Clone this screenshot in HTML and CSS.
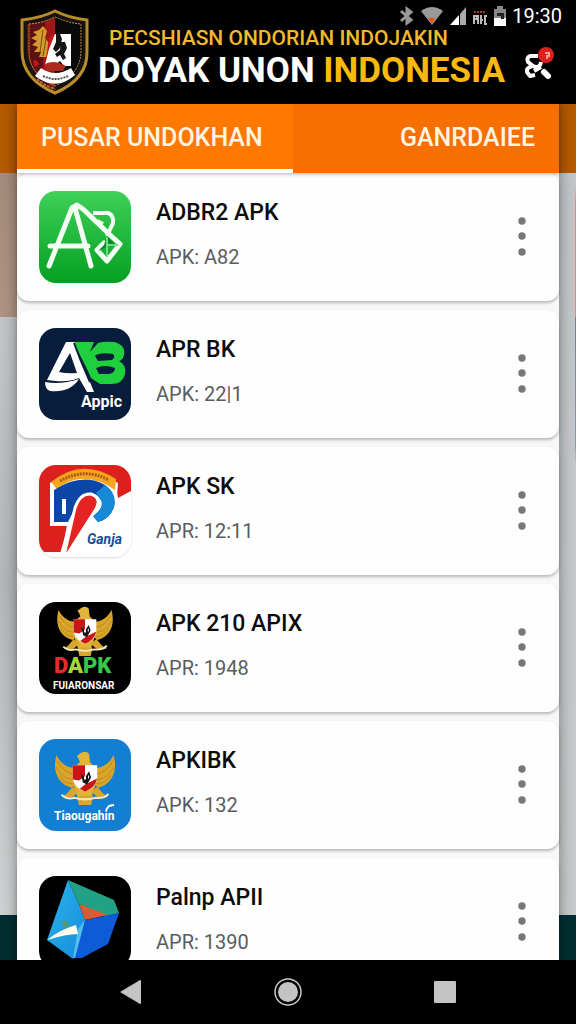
FILE: index.html
```html
<!DOCTYPE html>
<html lang="id">
<head>
  <meta charset="UTF-8">
  <meta name="viewport" content="width=device-width, initial-scale=1.0">
  <title>Doyak Unon Indonesia</title>
  <link rel="stylesheet" href="styles.css">
</head>
<body>
  <!-- shared shapes -->
  <svg class="defs" width="0" height="0" aria-hidden="true">
    <symbol id="garuda" viewBox="0 0 60 54">
      <path fill="#d9a62b" d="M2 4C-2 18 2 32 17 36L24 30 20 17C11 16 5 11 2 4ZM58 4C62 18 58 32 43 36L36 30 40 17C49 16 55 11 58 4Z"/>
      <path fill="none" stroke="#b07d18" stroke-width="0.7" d="M3 10C7 18 13 22 20 23M2 16C6 24 12 28 20 28M5 24C9 30 14 33 20 32M57 10C53 18 47 22 40 23M58 16C54 24 48 28 40 28M55 24C51 30 46 33 40 32"/>
      <path fill="#e3b43a" d="M24 8 22 5 26 2Q31-1 34 3L35 11 40 16V34L36 46H23L19 34V16L25 11Z"/>
      <path fill="#d9a62b" d="M18 35 12 42 8 45 17 46 24 40ZM42 35 48 42 53 45 43 46 36 40ZM22 44H38L36 53H24Z"/>
      <path fill="#fff" d="M18 14H42V28Q40 36 30 40 20 36 18 28Z"/>
      <path fill="#c81616" d="M18 14H30V25L24 29 18 28ZM30 33 42 27Q40 36 30 40L25 37Z"/>
      <path fill="#161616" d="M26 22 30 26 34 20 36 26 32 33 28 31Z"/>
      <path fill="#fff" d="M29 25h2v3h-2zM33 24h1v3h-1z"/>
      <path fill="none" stroke="#f3e9c5" stroke-width="2" d="M7 43Q12 48 20 46 30 49 40 46 49 47 53 42"/>
    </symbol>
    <symbol id="dots" viewBox="0 0 8 40">
      <circle cx="4" cy="5" r="3.7"/>
      <circle cx="4" cy="20" r="3.7"/>
      <circle cx="4" cy="36" r="3.7"/>
    </symbol>
  </svg>

  <header class="header">
    <svg class="crest" viewBox="0 0 70 86" aria-hidden="true">
      <path fill="#171313" stroke="#b98c2c" stroke-width="3" d="M35 2Q49 9 67 11V42Q68 70 35 84 2 70 2 42V11Q21 9 35 2Z"/>
      <path fill="#5d1112" d="M35 8Q22 14 7 15V42Q8 66 35 79Z"/>
      <path fill="#9f1618" d="M25 13 35 9V79L22 71Z"/>
      <path fill="#090909" d="M35 8Q48 14 63 15V42Q62 66 35 79Z"/>
      <path fill="none" stroke="#c39a43" stroke-width="1" stroke-dasharray="2 1" d="M9 15Q23 14 35 8 48 14 61 15V42Q61 65 35 77 9 65 9 42Z"/>
      <path fill="#d29a2d" d="M23 17 19 21 13 23 17 26 11 29 17 32 12 36 18 38 14 43 21 43 19 48 27 48 29 34 25 29 27 22Z"/>
      <path fill="none" stroke="#7b4a0c" d="M23 21 20 43M26 30 23 47"/>
      <path fill="#c91717" d="M29 28 35 25V48L24 60 27 43ZM13 52l3-1 3 4-4 3z"/>
      <path fill="#fff" d="M35 25H51V57H44L40 52 35 56H25L29 40Z"/>
      <path fill="#131313" d="M36 25h4l2 5-2 9-4 4-3-3 3-7zM41 33h4l2 6-3 6 2 4-3 2-3-5-3 2-2-3 5-4z"/>
      <path fill="#ad2a1f" d="M25 55Q34 50 46 57L43 62H27Z"/>
      <path fill="#fff" d="M21 59Q35 69 51 59L55 66Q36 83 15 67Z"/>
      <path fill="none" stroke="#555" stroke-width="2" stroke-dasharray="2 1" d="M23 67Q36 73 48 67"/>
      <path fill="none" stroke="#d66a25" stroke-width="2" stroke-dasharray="3 1" d="M17 70Q25 77 35 80"/>
    </svg>

    <div class="status">
      <svg width="16" height="20" viewBox="0 0 16 20" aria-label="Bluetooth">
        <path fill="none" stroke="#999" stroke-width="3" d="M2 5 12 14 8 17V3L12 6 2 15"/>
      </svg>
      <svg width="24" height="20" viewBox="0 0 24 20" aria-label="Wi-Fi">
        <path fill="#999" d="M1 5Q12-3 23 5L12 19Z"/>
        <path fill="#e35716" d="M8 12h7l-3 6z"/>
      </svg>
      <svg width="18" height="20" viewBox="0 0 18 20" aria-label="Sinyal">
        <path fill="#fff" d="M1 19 10 9V19Z"/>
        <path fill="#aaa" d="M11 8 17 1V19H11Z"/>
      </svg>
      <svg width="16" height="20" viewBox="0 0 16 20" aria-hidden="true">
        <path fill="none" stroke="#a33" stroke-width="2" stroke-dasharray="2 1" d="M2 6h12"/>
        <path fill="none" stroke="#bbb" stroke-width="2" d="M2 10v8M1 10h4v3H2M6 9v9M9 9v9M8 14h3M13 9v9h2M12 10h3"/>
      </svg>
      <svg width="14" height="20" viewBox="0 0 14 20" aria-label="Baterai">
        <path fill="#888" d="M4 0h6v3h3v9H1V3h3z"/>
        <path fill="#fff" d="M1 12h12v8H1z"/>
        <path fill="#222" d="M4 7h7v6H8v-3H4z"/>
      </svg>
      <time class="clock">19:30</time>
    </div>

    <div class="brand">
      <p class="brand-top">PECSHIASN ONDORIAN INDOJAKIN</p>
      <h1>DOYAK UNON <span>INDONESIA</span></h1>
    </div>

    <button class="search" type="button" aria-label="Cari">
      <svg width="32" height="36" viewBox="0 0 32 36">
        <path fill="none" stroke="#fff" stroke-width="4" stroke-linejoin="round" d="M14 10H6Q2 12 4 16L9 20Q16 23 17 16M10 20Q2 21 3 26L6 30 11 29M17 21 10 25"/>
        <path fill="none" stroke="#fff" stroke-width="6" stroke-linecap="round" d="M20 26 24 30"/>
        <circle cx="22" cy="9" r="8" fill="#dc201d"/>
        <path fill="none" stroke="#ff9d91" stroke-width="2" d="M21 7h4v3h-2v3"/>
      </svg>
    </button>
  </header>

  <main class="backdrop">
    <div class="sheet">
      <nav class="tabs">
        <a class="tab active" href="#pusar">PUSAR UNDOKHAN</a>
        <a class="tab" href="#ganrdaiee">GANRDAIEE</a>
      </nav>

      <ul class="list" id="pusar">
        <li class="card">
          <svg class="icon" viewBox="0 0 92 92" aria-hidden="true">
            <defs>
              <linearGradient id="green" x2="0" y2="1">
                <stop stop-color="#3fd05a"/>
                <stop offset="1" stop-color="#04a021"/>
              </linearGradient>
            </defs>
            <rect width="92" height="92" fill="url(#green)"/>
            <path fill="none" stroke="#f2fff2" stroke-width="5" stroke-linejoin="round" stroke-linecap="round" d="M10 75 33 17 38 14 44 18 70 43 81 53 68 70 58 59 65 52M36 17 52 75M11 55H49"/>
            <path fill="none" stroke="#f2fff2" stroke-width="4" d="M54 22H69Q75 24 74 32L68 45M58 30 64 33"/>
            <path fill="#0a8c2d" d="M68 45 76 53 68 56 59 60 65 54Z"/>
            <path fill="none" stroke="#72dc85" stroke-width="2" d="M68 46V66M67 54H79"/>
          </svg>
          <div class="info">
            <h2>ADBR2 APK</h2>
            <p>APK: A82</p>
          </div>
          <button class="more" type="button" aria-label="Menu ADBR2 APK"><svg><use href="#dots"/></svg></button>
        </li>

        <li class="card">
          <svg class="icon" viewBox="0 0 92 92" aria-hidden="true">
            <rect width="92" height="92" fill="#081d3c"/>
            <path fill="#20cf3c" d="M34 14H55L51 24 59 15Q65 13 75 14 87 17 85 27 84 32 80 33 88 37 86 46 84 56 72 56H61L52 50 49 43 42 29Z"/>
            <path fill="#081d3c" d="M56 28Q60 24 74 26 77 29 73 32L59 33ZM57 40Q66 36 76 40 76 45 70 46L60 46Z"/>
            <path fill="#fff" d="M27 14H35L55 64H48L40 50Q30 54 17 53L8 52ZM31 25 20 44Q29 46 38 45Z" fill-rule="evenodd"/>
            <path fill="#fff" d="M6 54Q22 57 40 51 31 65 11 63 6 61 6 54Z"/>
            <path fill="none" stroke="#081d3c" stroke-width="2" d="M35 15 42 33 51 54"/>
            <text class="appic-text" x="42" y="79">Appic</text>
          </svg>
          <div class="info">
            <h2>APR BK</h2>
            <p>APK: 22|1</p>
          </div>
          <button class="more" type="button" aria-label="Menu APR BK"><svg><use href="#dots"/></svg></button>
        </li>

        <li class="card">
          <svg class="icon pale" viewBox="0 0 92 92" aria-hidden="true">
            <rect width="92" height="92" fill="#fff"/>
            <path fill="#dc201e" d="M0 0H92V26L79 33 76 16 28 60 23 87H0Z"/>
            <path fill="#fff" d="M11 18Q44-4 79 18L78 31Q82 54 57 59L35 92H20L29 61H11Z"/>
            <path fill="#f5a51e" d="M12 17Q43-8 77 14L76 25Q44 3 18 24Z"/>
            <path fill="none" stroke="#a85c12" stroke-width="3" stroke-dasharray="2 1" d="M21 16Q45 2 70 15"/>
            <path fill="#0b46a8" d="M15 25Q43 7 66 20 78 28 75 42 71 54 59 57L54 51Q67 42 61 33 52 23 40 35L29 57H15Z"/>
            <path fill="#168ad8" d="M66 20Q78 28 75 42 71 54 59 57L54 51Q64 45 63 37L57 28Z"/>
            <path fill="none" stroke="#fff" stroke-width="4" d="M25 34V49"/>
            <path fill="#e42322" stroke="#fff" stroke-width="3" d="M25 91 36 43Q41 28 52 29 63 33 57 44L29 88Z"/>
            <text class="ganja-text" x="48" y="79">Ganja</text>
          </svg>
          <div class="info">
            <h2>APK SK</h2>
            <p>APR: 12:11</p>
          </div>
          <button class="more" type="button" aria-label="Menu APK SK"><svg><use href="#dots"/></svg></button>
        </li>

        <li class="card">
          <svg class="icon" viewBox="0 0 92 92" aria-hidden="true">
            <rect width="92" height="92" fill="#000"/>
            <use href="#garuda" x="17" y="4" width="58" height="51"/>
            <text class="dapk-text" x="15" y="71"><tspan fill="#e32c2c">D</tspan><tspan fill="#a8d830">A</tspan><tspan fill="#35c84b">PK</tspan></text>
            <text class="small-text" x="14" y="87">FUIARONSAR</text>
          </svg>
          <div class="info">
            <h2>APK 210 APIX</h2>
            <p>APR: 1948</p>
          </div>
          <button class="more" type="button" aria-label="Menu APK 210 APIX"><svg><use href="#dots"/></svg></button>
        </li>

        <li class="card">
          <svg class="icon" viewBox="0 0 92 92" aria-hidden="true">
            <rect width="92" height="92" fill="#127fd2"/>
            <use href="#garuda" x="15" y="12" width="62" height="55"/>
            <text class="tiao-text" x="15" y="81">Tiaougahin</text>
            <path fill="none" stroke="#fff" stroke-width="2" d="M67 71 70 67 75 66"/>
          </svg>
          <div class="info">
            <h2>APKIBK</h2>
            <p>APK: 132</p>
          </div>
          <button class="more" type="button" aria-label="Menu APKIBK"><svg><use href="#dots"/></svg></button>
        </li>

        <li class="card">
          <svg class="icon" viewBox="0 0 92 92" aria-hidden="true">
            <defs>
              <linearGradient id="cyan" x2="1" y2="1">
                <stop stop-color="#29b5ea"/>
                <stop offset="1" stop-color="#168bdc"/>
              </linearGradient>
            </defs>
            <rect width="92" height="92" fill="#000"/>
            <path fill="url(#cyan)" d="M29 4 8 64 34 83 46 44 40 28Z"/>
            <path fill="#23a184" d="M29 4 75 24 80 37 67 40 40 28Z"/>
            <path fill="#d85c36" d="M40 28 69 39 46 44Z"/>
            <path fill="#0d5bd6" d="M46 44 80 37 69 68 52 77 43 82H34Z"/>
            <path fill="#50bff0" d="M46 44 36 82H34L39 53Z"/>
            <path fill="#4c9a80" d="M22 46 28 44 31 51 27 54Z"/>
            <path fill="#fffbe8" d="M8 64Q22 53 37 49L39 58Q27 58 8 64Z"/>
          </svg>
          <div class="info">
            <h2>Palnp APII</h2>
            <p>APR: 1390</p>
          </div>
          <button class="more" type="button" aria-label="Menu Palnp APII"><svg><use href="#dots"/></svg></button>
        </li>
      </ul>
    </div>
  </main>

  <footer class="navbar">
    <button type="button" aria-label="Kembali">
      <svg width="24" height="28" viewBox="0 0 24 28"><path fill="#c4c4c4" d="M1 14 21 2Q22 2 22 3V25Q22 26 21 26Z"/></svg>
    </button>
    <button type="button" aria-label="Beranda">
      <svg width="30" height="30" viewBox="0 0 30 30"><circle cx="15" cy="15" r="13" fill="none" stroke="#c4c4c4" stroke-width="1.5"/><circle cx="15" cy="15" r="10" fill="#c4c4c4"/></svg>
    </button>
    <button type="button" aria-label="Aplikasi terbaru">
      <svg width="24" height="24" viewBox="0 0 24 24"><rect x="1" y="1" width="22" height="22" rx="1" fill="#c4c4c4"/></svg>
    </button>
  </footer>
</body>
</html>
```

FILE: styles.css
```css
* {
  box-sizing: border-box;
}
body {
  background-color: black;
  display: flex;
  flex-direction: column;
  font-family: Roboto, "Liberation Sans", sans-serif;
  height: 100vh;
  margin: 0;
  overflow: hidden;
}
h1, h2, p, ul {
  margin: 0;
  padding: 0;
}
button {
  background: none;
  border: none;
  cursor: pointer;
  padding: 0;
}
svg {
  display: block;
}
.defs {
  position: absolute;
}

/* header */
.header {
  background-color: black;
  color: white;
  display: grid;
  flex: none;
  grid-template-columns: 70px 1fr 32px;
  grid-template-rows: 24px 72px;
  column-gap: 8px;
  padding: 4px 20px;
}
.crest {
  align-self: center;
  grid-row: 1 / 3;
  width: 70px;
  height: 86px;
}
.status {
  align-items: center;
  display: flex;
  gap: 5px;
  grid-column: 2 / 4;
  justify-content: flex-end;
  margin-right: -6px;
}
.clock {
  font-size: 20px;
  line-height: 24px;
}
.brand {
  white-space: nowrap;
}
.brand-top {
  color: #f2b92b;
  font-size: 21px;
  font-weight: 500;
  line-height: 20px;
  padding-left: 11px;
}
.brand h1 {
  font-size: 35px;
  font-weight: 700;
  line-height: 46px;
}
.brand h1 span {
  color: #fbb90f;
}
.search {
  align-self: center;
  height: 36px;
}

/* page behind the sheet */
.backdrop {
  background:
    linear-gradient(transparent 80px, #d98f80 100px, #d98f80 213px, #6d7fa8 213px, #8b98b4 340px, transparent 360px) right / 1px 100% no-repeat,
    linear-gradient(#b45a00 69px, #a58c7c 69px, #b09482 213px, #c3c6c8 213px, #b4b7b9 480px, #cfd1d2 811px, #002f32 811px) left / 50% 100% no-repeat,
    linear-gradient(#b45a00 69px, #c3c6c8 69px, #c8cacb 811px, #002f32 811px) right / 50% 100% no-repeat;
  flex: 1;
  min-height: 0;
  overflow: hidden;
  padding: 0 17px;
}
.sheet {
  background-color: #f7f7f8;
  box-shadow: 0 0 14px rgba(0, 0, 0, 0.4);
  min-height: 100%;
}

/* tabs */
.tabs {
  background-color: #f76f00;
  box-shadow: 0 1px 4px rgba(0, 0, 0, 0.3);
  display: flex;
  height: 69px;
  justify-content: space-between;
  position: relative;
}
.tab {
  border-bottom: 4px solid transparent;
  color: #fff5e2;
  font-size: 25px;
  font-weight: 500;
  line-height: 62px;
  padding: 3px 24px 0;
  text-decoration: none;
  white-space: nowrap;
}
.tab.active {
  background-color: #ff7800;
  border-color: white;
  flex: 0 0 51%;
}

/* app list */
.list {
  display: flex;
  flex-direction: column;
  gap: 9px;
  list-style: none;
}
.card {
  align-items: center;
  background-color: #fefefe;
  border-radius: 12px;
  box-shadow: 0 2px 3px rgba(0, 0, 0, 0.25);
  display: flex;
  gap: 25px;
  height: 128px;
  padding: 0 19px 0 22px;
}
.icon {
  border-radius: 17px;
  flex: none;
  height: 92px;
  width: 92px;
}
.pale {
  box-shadow: 0 1px 2px rgba(0, 0, 0, 0.15);
}
.info {
  flex: 1;
  padding-bottom: 4px;
}
.info h2 {
  color: #0c0c0c;
  font-size: 23px;
  font-weight: 500;
  line-height: 28px;
  margin-bottom: 16px;
}
.info p {
  color: #5c5c5c;
  font-size: 20px;
  line-height: 28px;
}
.more {
  display: flex;
  fill: #777;
  justify-content: center;
  padding-bottom: 3px;
  width: 36px;
}
.more svg {
  height: 40px;
  width: 8px;
}

/* lettering inside the app icons */
.appic-text {
  fill: white;
  font-size: 16px;
  font-weight: 700;
}
.ganja-text {
  fill: #174e9c;
  font-size: 14px;
  font-style: italic;
  font-weight: 700;
}
.dapk-text {
  font-size: 22px;
  font-weight: 900;
}
.small-text {
  fill: white;
  font-size: 10px;
  font-weight: 700;
}
.tiao-text {
  fill: white;
  font-size: 12px;
  font-weight: 700;
}

/* system buttons */
.navbar {
  background-color: black;
  display: grid;
  flex: none;
  grid-template-columns: repeat(3, 1fr);
  height: 64px;
  padding: 0 9%;
}
.navbar button {
  display: grid;
  place-items: center;
}
```
